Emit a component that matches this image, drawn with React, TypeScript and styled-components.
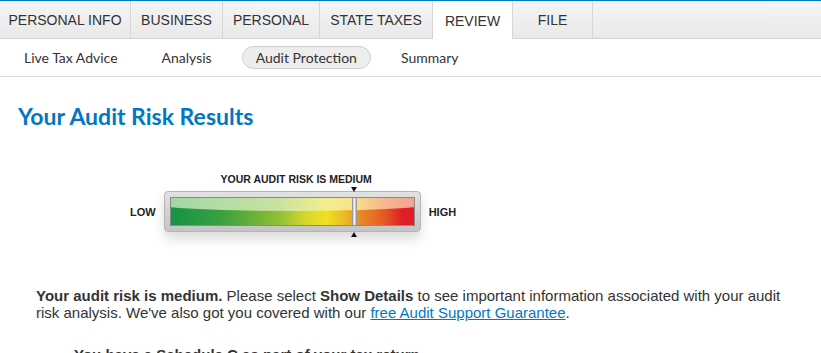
import styled, { createGlobalStyle } from 'styled-components';

const GlobalStyle = createGlobalStyle`
    html, body {
        margin: 0;
        padding: 0;
        background: #ffffff;
    }
    body {
        font-family: 'Liberation Sans', Arial, sans-serif;
        color: #333;
        overflow: hidden;
    }
`;

const Page = styled.div`
    width: 821px;
    height: 353px;
    border-top: 1px solid #0077c5;
    box-sizing: border-box;
    overflow: hidden;
`;

const TabBar = styled.nav`
    display: flex;
    height: 38px;
    box-sizing: border-box;
    background: linear-gradient(#f5f5f5, #e9e9e9);
    border-bottom: 1px solid #d3d3d3;
`;

const Tab = styled.div<{ $active?: boolean; $width: number }>`
    display: flex;
    align-items: center;
    justify-content: center;
    width: ${(p) => p.$width}px;
    padding-top: ${(p) => (p.$active ? '2px' : '0')};
    box-sizing: border-box;
    font-size: 14px;
    color: #333;
    border-right: 1px solid #d6d6d6;
    margin-bottom: ${(p) => (p.$active ? '-1px' : '0')};
    background: ${(p) => (p.$active ? '#ffffff' : 'transparent')};
`;

const SubNav = styled.div`
    display: flex;
    align-items: center;
    gap: 16px;
    height: 38px;
    padding-left: 10px;
    box-sizing: border-box;
    border-bottom: 1px solid #dcdcdc;
    font-family: Lato, 'Noto Sans', sans-serif;
    font-size: 14px;
`;

const SubItem = styled.div<{ $active?: boolean }>`
    display: flex;
    align-items: center;
    height: 23px;
    padding: 0 13px;
    margin-top: -1px;
    box-sizing: border-box;
    color: #333;
    border-radius: 12px;
    border: 1px solid ${(p) => (p.$active ? '#cfcfcf' : 'transparent')};
    background: ${(p) => (p.$active ? '#ededed' : 'transparent')};
`;

const Content = styled.main`
    padding: 25px 0 0 18px;
`;

const Heading = styled.h1`
    margin: 0;
    font-family: Lato, 'Noto Sans', sans-serif;
    font-weight: 700;
    font-size: 23px;
    line-height: 28px;
    color: #0077c5;
`;

const MeterRow = styled.div`
    display: flex;
    align-items: center;
    gap: 8px;
    margin: 43px 0 0 112px;
`;

const EndLabel = styled.span`
    font-size: 11px;
    font-weight: 700;
    color: #222;
`;

const MeterBlock = styled.div`
    position: relative;
    padding: 18px 0;
`;

const MeterTitle = styled.div`
    position: absolute;
    top: 0;
    left: 8px;
    right: 0;
    text-align: center;
    font-size: 10.5px;
    line-height: 12px;
    font-weight: 700;
    color: #222;
`;

const Frame = styled.div`
    width: 257px;
    height: 41px;
    padding: 5px;
    box-sizing: border-box;
    border-radius: 4px;
    background: linear-gradient(#e2e2e2, #c4c4c4);
    border: 1px solid #b5b5b5;
    box-shadow: 0 7px 12px rgba(0, 0, 0, 0.14);
`;

const Bar = styled.div`
    position: relative;
    height: 100%;
    border: 1px solid #8a8a8a;
    box-sizing: border-box;
    overflow: hidden;
    background: linear-gradient(
        90deg,
        #159346 0%,
        #3ea140 22%,
        #8fbe36 44%,
        #d8d82a 56%,
        #f0e020 64%,
        #e8b822 72%,
        #e88a22 78%,
        #e55826 88%,
        #e01e28 95%,
        #e01e28 100%
    );

    /* glossy top half */
    &::before {
        content: '';
        position: absolute;
        left: -10%;
        right: -10%;
        top: -40px;
        height: 53px;
        border-radius: 0 0 50% 50% / 0 0 16% 16%;
        background: linear-gradient(
            90deg,
            #98d4a4 0%,
            #b4dca6 25%,
            #c8e2a0 45%,
            #f2ee90 62%,
            #f6e08c 72%,
            #f6bc8e 80%,
            #f49a98 95%
        );
    }
`;

const Marker = styled.div<{ $at: number }>`
    position: absolute;
    top: -5px;
    bottom: -5px;
    left: ${(p) => p.$at}px;
    width: 5px;
    background: linear-gradient(90deg, #c8c8c8, #f4f4f4, #b0b0b0);
    border: 1px solid #999;
    box-sizing: border-box;
`;

const Arrow = styled.div<{ $at: number; $up?: boolean }>`
    position: absolute;
    left: ${(p) => p.$at}px;
    ${(p) => (p.$up ? 'bottom: 13px;' : 'top: 14px;')}
    width: 0;
    height: 0;
    border-left: 3.5px solid transparent;
    border-right: 3.5px solid transparent;
    ${(p) => (p.$up ? 'border-bottom: 5px solid #111;' : 'border-top: 5px solid #111;')}
`;

const Summary = styled.p`
    margin: 37px 30px 0 18px;
    font-size: 15px;
    line-height: 17px;
    color: #333;

    b {
        color: #333;
    }

    a {
        color: #0077c5;
        text-decoration: underline;
    }
`;

const Finding = styled.div`
    margin: 25px 0 0 56px;
    font-size: 15px;
    line-height: 17px;
    font-weight: 700;
    color: #333;
`;

const tabs = [
    { label: 'PERSONAL INFO', width: 131 },
    { label: 'BUSINESS', width: 92 },
    { label: 'PERSONAL', width: 97 },
    { label: 'STATE TAXES', width: 113 },
    { label: 'REVIEW', width: 80 },
    { label: 'FILE', width: 80 },
];
const subItems = ['Live Tax Advice', 'Analysis', 'Audit Protection', 'Summary'];

export default function App() {
    const markerPos = 187;

    return (
        <Page>
            <GlobalStyle />
            <TabBar>
                {tabs.map((t) => (
                    <Tab key={t.label} $width={t.width} $active={t.label === 'REVIEW'}>
                        {t.label}
                    </Tab>
                ))}
            </TabBar>
            <SubNav>
                {subItems.map((s) => (
                    <SubItem key={s} $active={s === 'Audit Protection'}>
                        {s}
                    </SubItem>
                ))}
            </SubNav>
            <Content>
                <Heading>Your Audit Risk Results</Heading>
                <MeterRow>
                    <EndLabel>LOW</EndLabel>
                    <MeterBlock>
                        <MeterTitle>YOUR AUDIT RISK IS MEDIUM</MeterTitle>
                        <Arrow $at={markerPos} />
                        <Frame>
                            <Bar>
                                <Marker $at={markerPos - 6} />
                            </Bar>
                        </Frame>
                        <Arrow $at={markerPos} $up />
                    </MeterBlock>
                    <EndLabel>HIGH</EndLabel>
                </MeterRow>
                <Summary>
                    <b>Your audit risk is medium.</b> Please select <b>Show Details</b> to see
                    important information associated with your audit risk analysis. We've also got
                    you covered with our <a href="#">free Audit Support Guarantee</a>.
                </Summary>
                <Finding>You have a Schedule C as part of your tax return</Finding>
            </Content>
        </Page>
    );
}
